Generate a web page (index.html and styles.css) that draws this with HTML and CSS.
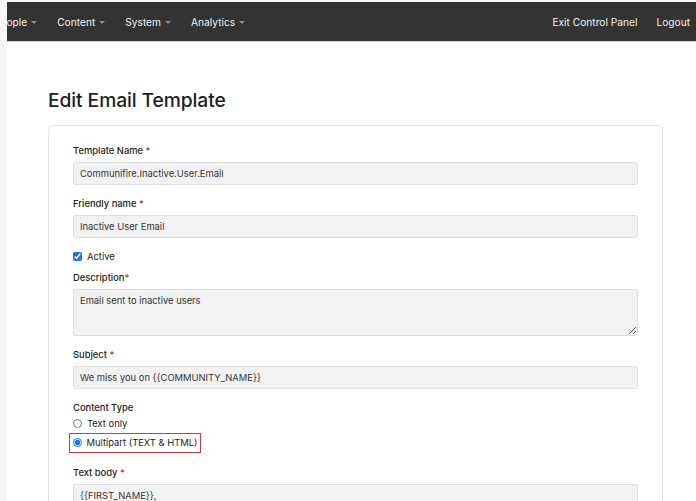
FILE: index.html
```html
<!DOCTYPE html>
<html lang="en">
<head>
<meta charset="utf-8">
<title>Edit Email Template</title>
<link rel="stylesheet" href="styles.css">
</head>
<body>
<div class="app">
  <nav class="topnav">
    <ul class="menu">
      <li class="menu-item first">People <span class="caret"></span></li>
      <li class="menu-item">Content <span class="caret"></span></li>
      <li class="menu-item">System <span class="caret"></span></li>
      <li class="menu-item">Analytics <span class="caret"></span></li>
    </ul>
    <ul class="menu menu-right">
      <li class="menu-item">Exit Control Panel</li>
      <li class="menu-item">Logout</li>
    </ul>
  </nav>

  <main class="page">
    <h1 class="page-title">Edit Email Template</h1>

    <section class="card">
      <div class="form-group">
        <label class="form-label">Template Name <span class="req">*</span></label>
        <div class="form-control">Communifire.Inactive.User.Email</div>
      </div>

      <div class="form-group">
        <label class="form-label">Friendly name <span class="req">*</span></label>
        <div class="form-control">Inactive User Email</div>
      </div>

      <label class="check-row">
        <input type="checkbox" class="check" checked>
        <span>Active</span>
      </label>

      <div class="form-group">
        <label class="form-label">Description<span class="req">*</span></label>
        <textarea class="form-control textarea" readonly>Email sent to inactive users</textarea>
      </div>

      <div class="form-group">
        <label class="form-label">Subject <span class="req">*</span></label>
        <div class="form-control">We miss you on {{COMMUNITY_NAME}}</div>
      </div>

      <div class="form-group radio-group">
        <span class="form-label plain">Content Type</span>
        <label class="radio-row">
          <input type="radio" name="ctype" class="radio">
          <span>Text only</span>
        </label>
        <label class="radio-row highlighted">
          <input type="radio" name="ctype" class="radio" checked>
          <span>Multipart (TEXT &amp; HTML)</span>
        </label>
      </div>

      <div class="form-group">
        <label class="form-label">Text body <span class="req">*</span></label>
        <textarea class="form-control textarea tall" readonly>{{FIRST_NAME}},</textarea>
      </div>
    </section>
  </main>
</div>
</body>
</html>
```

FILE: styles.css
```css
* {
  box-sizing: border-box;
}

html, body {
  margin: 0;
  padding: 0;
}

body {
  background: #f6f6f6;
  font-family: Inter, "Liberation Sans", Arial, sans-serif;
  color: #222;
  overflow: hidden;
}

.app {
  margin-left: 7px;
  padding-top: 2px;
}

/* top navigation bar */
.topnav {
  display: flex;
  justify-content: space-between;
  align-items: center;
  height: 40px;
  background: #333333;
  border-bottom: 1px solid #cfcfcf;
  overflow: hidden;
}

.menu {
  display: flex;
  align-items: center;
  gap: 20px;
  margin: 0;
  padding: 0;
  list-style: none;
}

.menu-item {
  display: flex;
  align-items: center;
  gap: 4px;
  color: #f1f1f1;
  font-size: 10.2px;
  white-space: nowrap;
}

.menu-item.first {
  margin-left: -13px;
}

.menu-right {
  gap: 19px;
  padding-right: 6px;
}

.caret {
  width: 0;
  height: 0;
  border-left: 3px solid transparent;
  border-right: 3px solid transparent;
  border-top: 3px solid #8e8e8e;
  margin-top: 1px;
}

/* page body */
.page {
  background: #fff;
  padding: 46px 33px 40px 41px;
  min-height: 470px;
}

.page-title {
  margin: 0 0 13px;
  font-size: 19.3px;
  font-weight: 500;
  line-height: 24px;
  color: #1e1e1e;
  letter-spacing: -0.1px;
}

.card {
  border: 1px solid #e4e4e4;
  border-radius: 4px;
  padding: 17.5px 24px 24px;
  background: #fff;
}

.form-group {
  margin-bottom: 12px;
}

.form-label {
  display: block;
  margin-bottom: 4px;
  font-size: 9.4px;
  line-height: 14px;
  font-weight: 500;
  color: #222;
}

.form-label.plain {
  margin-bottom: 2px;
}

.req {
  color: #c62828;
}

.form-control {
  display: block;
  width: 100%;
  height: 23px;
  padding: 0 6px;
  background: #f2f2f2;
  border: 1px solid #dedede;
  border-radius: 2px;
  font-family: inherit;
  font-size: 9.4px;
  line-height: 21px;
  color: #333;
}

.textarea {
  height: 47px;
  padding: 4px 6px;
  line-height: 14px;
  resize: vertical;
  outline: none;
}

.textarea.tall {
  height: 90px;
}

.check-row,
.radio-row {
  display: flex;
  align-items: center;
  gap: 4px;
  font-size: 9.4px;
  line-height: 14px;
  color: #222;
  white-space: nowrap;
}

.check-row {
  margin-bottom: 7px;
}

.check,
.radio {
  width: 9px;
  height: 9px;
  margin: 0 1px 0 0;
  accent-color: #1a73e8;
}

.radio-row {
  margin-bottom: 2px;
}

.radio-row.highlighted {
  width: 132px;
  height: 20px;
  margin-left: -4px;
  padding-left: 2.5px;
  border: 1.5px solid #d9363e;
  margin-bottom: 0;
}

.radio-group {
  margin-bottom: 13px;
}
```
